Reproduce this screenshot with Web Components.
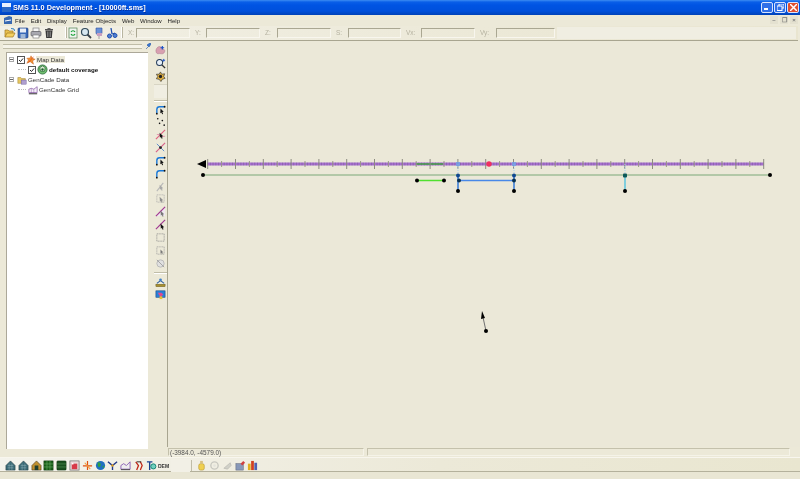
<!DOCTYPE html>
<html><head><meta charset="utf-8"><style>
html,body{margin:0;padding:0;background:#ece9d8}
body{width:800px;height:479px;overflow:hidden;font:7px "Liberation Sans",sans-serif}
</style></head><body>
<sms-app></sms-app>
<script>
const ICONS={
open:'<path d="M1 10V3h3l1 1h4v2" fill="#e8c050" stroke="#a07820" stroke-width=".7"/><path d="M1 10l2-4h8l-2 4z" fill="#f4d060" stroke="#a07820" stroke-width=".7"/><path d="M7 1.5l3 .5.5 2" fill="none" stroke="#3080c0"/>',
save:'<rect x="1" y="1" width="10" height="10" rx="1" fill="#3868b8" stroke="#183878" stroke-width=".6"/><rect x="3" y="1.5" width="6" height="4" fill="#e8eef8"/><rect x="3.5" y="7" width="5" height="4" fill="#a0b8d8"/>',
print:'<rect x="3" y="1" width="6" height="4" fill="#f4f4f4" stroke="#707070" stroke-width=".6"/><rect x="1" y="4.5" width="10" height="4.5" rx="1" fill="#a8a8b0" stroke="#505058" stroke-width=".6"/><rect x="3" y="8" width="6" height="3" fill="#fff" stroke="#707070" stroke-width=".6"/>',
trash:'<path d="M2.5 3.5h7l-.7 7.5H3.200z" fill="#383838"/><path d="M4.500 4.500v5.500M6 4.500v5.500M7.500 4.500v5.500" stroke="#a8a8a8" stroke-width=".6"/><rect x="2" y="2" width="8" height="1.300" fill="#505050"/><rect x="4.500" y="1" width="3" height="1" fill="#606060"/>',
refresh:'<rect x="2" y="1" width="8" height="10" fill="#f0f4f0" stroke="#508050" stroke-width=".7"/><path d="M4 5a2.200 2.200 0 0 1 4 0M8 7a2.200 2.200 0 0 1-4 0" fill="none" stroke="#10a030" stroke-width="1.100"/>',
zoom:'<circle cx="5" cy="5" r="3.500" fill="#d8e8f0" stroke="#304858" stroke-width="1.200"/><path d="M7.500 7.500L11 11" stroke="#384048" stroke-width="1.800"/>',
pin:'<path d="M3 1h6v5.500L6 9 3 6.500z" fill="#6890d8" stroke="#3050a0" stroke-width=".6"/><path d="M6 8.500V12" stroke="#a0a0a0"/><rect x="4" y="6" width="5" height="3" fill="#c8a0c0"/>',
scissor:'<path d="M5 1l1 6" stroke="#2050b0" stroke-width="1.300"/><circle cx="3.500" cy="9" r="2" fill="#5080d0" stroke="#2050b0"/><circle cx="9" cy="8.500" r="2" fill="#5080d0" stroke="#2050b0"/><path d="M6 7l3-1" stroke="#2050b0"/>',
mapdata:'<path d="M6 1l1.500 3L11 5 8 7l1 4-4-3-4 2 2-4-2-2 4-.5z" fill="#f09030" stroke="#c05010" stroke-width=".5"/><path d="M3 9l6-7" stroke="#e04010" stroke-width=".8"/>',
coverage:'<circle cx="6" cy="6" r="5" fill="#70c070" stroke="#206030" stroke-width=".8"/><path d="M3 4l3-2 3 2-1 4H4z" fill="#d8e8d0" stroke="#206030" stroke-width=".7"/><circle cx="6" cy="6" r="1.300" fill="#206030"/>',
folder:'<path d="M1 10V3h3.500l1 1.300H10V10z" fill="#e8c860" stroke="#a08030" stroke-width=".6"/><rect x="5" y="6" width="6" height="5" fill="#b0a0d0" stroke="#605090" stroke-width=".5"/>',
grid:'<path d="M1 9V5l3-1 3 1 4-3v7z" fill="#f4eef8" stroke="#8050a0" stroke-width=".8"/><path d="M1 10.500h10" stroke="#404040" stroke-width="1.300"/><path d="M4 4v6M7 5v5" stroke="#8050a0" stroke-width=".5"/>',
polar:'<path d="M1 6c.5-3 3-5 5-4 2 .5 2 3 4 3 1.500 1 .5 4-1.500 4.500C6 10 6 9 3.500 9.500 1.500 9.500 1 8 1 6z" fill="#d8a0b0" stroke="#a87088" stroke-width=".5"/><path d="M8 1v4M6 3h4" stroke="#1850c8" stroke-width="1.300"/>',
zoomplus:'<circle cx="5" cy="5" r="3.300" fill="#e8f0f8" stroke="#203858" stroke-width="1.100"/><path d="M7.500 7.500L11 11" stroke="#303030" stroke-width="1.500"/><path d="M9.500 1v3M8 2.500h3" stroke="#1850c8"/>',
gear:'<path d="M6 1l1.300 2.500L10.500 3 9.500 6l1.500 2-3 1-1.500 2.500L4.500 9l-3-.5L3 6 1.500 3.500 4.500 3.500z" fill="#e0b040" stroke="#303030" stroke-width=".7"/><circle cx="6" cy="6" r="1.800" fill="#202020"/>',
arc:'<path d="M2 10V6q0-3 3-3h5" fill="none" stroke="#1878d8" stroke-width="1.500"/><path d="M6 5l3.500 3.500-1.500.3.800 2-1 .4-.8-2-1.200 1z" fill="#111"/><circle cx="2" cy="10.500" r="1" fill="#111"/><circle cx="10.500" cy="3" r="1" fill="#111"/>',
dots:'<g fill="#111"><circle cx="3" cy="3" r=".9"/><circle cx="8" cy="5" r=".9"/><circle cx="5" cy="8" r=".9"/><circle cx="10" cy="10" r=".9"/></g>',
vert:'<path d="M1 11L11 1" stroke="#e06080" stroke-width="1.200"/><path d="M2 6h3M7 8h4" stroke="#e080a0" stroke-width=".8"/><path d="M5 4l4 4-1.500.2.800 2-1 .4-.8-2-1.100 1z" fill="#111"/>',
vert2:'<path d="M1 11L11 1" stroke="#d86088" stroke-width="1.200"/><path d="M2 2l8 8" stroke="#3070c8" stroke-width=".8"/><circle cx="6" cy="6" r="1.500" fill="#222"/>',
arcsel:'<path d="M2 10V6q0-3 3-3h5" fill="none" stroke="#1878d8" stroke-width="1.500"/><circle cx="2" cy="10.500" r="1" fill="#111"/><circle cx="10.500" cy="3" r="1" fill="#111"/>',
gray1:'<path d="M2 11L9 2" stroke="#b8b8b8" stroke-width="1.200"/><path d="M5 4l4 4-1.500.2.800 2-1 .4-.8-2-1.100 1z" fill="#a8a8a8"/>',
gray2:'<rect x="2" y="2" width="8" height="8" fill="none" stroke="#a8a8a8" stroke-dasharray="1 1"/><path d="M5 4l4 4-1.500.2.800 2-1 .4-.8-2-1.100 1z" fill="#909090"/>',
poly:'<path d="M1 11L11 1V11z" fill="#f0e8f0"/><path d="M1 11L11 1" stroke="#a03890" stroke-width="1.300"/><path d="M6 5l4 4-1.500.2.800 2-1 .4-.8-2-1.100 1z" fill="#777"/>',
poly2:'<path d="M1 11L11 1" stroke="#a03890" stroke-width="1.300"/><path d="M6 5l4 4-1.500.2.800 2-1 .4-.8-2-1.100 1z" fill="#111"/>',
rect1:'<rect x="2" y="2" width="8" height="8" fill="none" stroke="#888" stroke-dasharray="1 1"/>',
rect2:'<rect x="2" y="2" width="8" height="8" fill="none" stroke="#999" stroke-dasharray="1 1"/><path d="M6 5l3 3-1.200.2.500 1.500-.8.300-.5-1.500-1 1z" fill="#777"/>',
gray3:'<circle cx="6" cy="6" r="4" fill="#e0e0e0" stroke="#b8b8b8"/><path d="M2 2l8 8" stroke="#a0a0a0"/>',
stack:'<path d="M2 7l4-3 4 3" fill="none" stroke="#3060a0" stroke-width="1.200"/><rect x="1" y="8" width="10" height="2.500" fill="#a89030" stroke="#605010" stroke-width=".5"/><circle cx="6" cy="3" r="1.500" fill="#4080c8"/>',
mapbox:'<rect x="1" y="2" width="10" height="7" fill="#2880d8" stroke="#104080" stroke-width=".6"/><path d="M3 4h4l2 2-3 3z" fill="#e04890"/><rect x="5" y="8" width="3" height="3" fill="#e8c030"/>',
house1:'<path d="M6 1L1 6v5h10V6z" fill="#3c6c78" stroke="#203840" stroke-width=".6"/><path d="M3 6h6M3 8.500h6M4.500 4v7M7.500 4v7" stroke="#90b0b8" stroke-width=".5"/>',
house2:'<path d="M6 1L1 6v5h10V6z" fill="#c09030" stroke="#403010" stroke-width=".6"/><rect x="4" y="6" width="4" height="5" fill="#204030"/>',
green1:'<rect x="1" y="1" width="10" height="10" fill="#186018" stroke="#0a300a" stroke-width=".6"/><path d="M4.300 1v10M7.600 1v10M1 4.300h10M1 7.600h10" stroke="#70b070" stroke-width=".6"/>',
green2:'<rect x="1" y="1" width="10" height="10" rx="1" fill="#1a5020" stroke="#0a300a" stroke-width=".6"/><path d="M1 4.300h10M1 7.600h10" stroke="#60a060" stroke-width=".6"/>',
redbox:'<rect x="1" y="1" width="10" height="10" fill="#e8d8d8" stroke="#606060" stroke-width=".7"/><rect x="3" y="4" width="6" height="6" fill="#d83848"/><circle cx="4" cy="4" r="1" fill="#fff"/>',
star:'<path d="M1 6.500h10M6 1v10" stroke="#e05010" stroke-width="1.300"/><path d="M3 3l6 7" stroke="#f0a040" stroke-width="1.200"/>',
globe:'<circle cx="6" cy="6" r="5" fill="#2070c0"/><path d="M3 2.500c3 0 4 2 3 4s-3 1-3-1zM8 7l2-1v3z" fill="#30a040"/>',
y:'<path d="M1 2l5 4 5-4M6 6v5" fill="none" stroke="#203888" stroke-width="1.500"/><circle cx="6" cy="6" r="1.300" fill="#e0a020"/>',
line:'<path d="M1 10V6l3-2 3 2 4-4v8z" fill="#eee" stroke="#8050b0" stroke-width=".9"/><path d="M1 10.500h10" stroke="#444"/>',
redchain:'<path d="M3 2l3 4-2 5M8 2l2 4-2 5" fill="none" stroke="#c02818" stroke-width="1.400"/><path d="M4 2h5" stroke="#222"/>',
tb:'<path d="M1 2h6M4 2v9" stroke="#1a4090" stroke-width="1.500"/><circle cx="8" cy="7" r="2.800" fill="#70d0c0" stroke="#108070"/>',
dem:'<text x="6" y="8.500" text-anchor="middle" font-family="Liberation Sans" font-weight="bold" font-size="5.500" fill="#333">DEM</text>',
bottle:'<rect x="3" y="4" width="6" height="7" rx="2" fill="#f0d050" stroke="#b09020" stroke-width=".6"/><rect x="4.500" y="1" width="3" height="3" fill="#d8c080"/>',
g1:'<circle cx="6" cy="6" r="4" fill="none" stroke="#c8c8c0" stroke-width="1.500"/><circle cx="6" cy="6" r="1.500" fill="#e4e4dc"/>',
g2:'<path d="M2 9l7-6 1 3-4 4z" fill="#d0d0c8" stroke="#b0b0a8" stroke-width=".6"/>',
g3:'<rect x="1" y="4" width="8" height="7" fill="#8898b8" stroke="#505870" stroke-width=".5"/><path d="M6 4l3-3 2 2-3 3z" fill="#d04040"/>',
bars:'<rect x="1" y="4" width="3" height="7" fill="#e0b020"/><rect x="4.500" y="1" width="3" height="10" fill="#d04020"/><rect x="8" y="3" width="3" height="8" fill="#5060b0"/>'
};
function def(n,c){customElements.define(n,c)}
function shadow(el,html){el.attachShadow({mode:'open'}).innerHTML=html}
def('sms-icon',class extends HTMLElement{connectedCallback(){const s=this.getAttribute('size')||12;
 shadow(this,`<style>:host{display:inline-flex;width:${s}px;height:${s}px;flex:none}svg{width:100%;height:100%;display:block}</style><svg viewBox="0 0 12 12">${ICONS[this.getAttribute('name')]||''}</svg>`)}});
def('sms-title',class extends HTMLElement{connectedCallback(){shadow(this,`<style>
:host{display:flex;align-items:center;height:15px;background:linear-gradient(#3d8cf2 0,#0a5fe8 2px,#0054e3 5px,#0050dc 11px,#0042b8 15px);color:#fff;font:bold 7.3px "Liberation Sans",sans-serif;padding:0 1px 0 2px;box-sizing:border-box;gap:2px}
.t{flex:1;text-shadow:.5px .5px 0 #0030a0;white-space:nowrap}
.l{width:9px;height:9px;background:linear-gradient(#e8f0ff 45%,#2868c8 45%);flex:none}
.b{width:12px;height:11px;border:1px solid #d8e4fc;border-radius:2px;box-sizing:border-box;background:#3070e8;display:flex;align-items:center;justify-content:center;color:#fff}
.x{background:#e05030}.r{display:flex;gap:1px}
</style><span class="l"></span><span class="t">SMS 11.0 Development - [10000ft.sms]</span><span class="r"><span class="b"><svg width="6" height="6"><rect y="4" width="4" height="2" fill="#fff"/></svg></span><span class="b"><svg width="7" height="7"><rect x="2" y="0" width="5" height="4" fill="none" stroke="#fff"/><rect x="0" y="2" width="5" height="4.500" fill="#3070e8" stroke="#fff"/></svg></span><span class="b x"><svg width="7" height="7"><path d="M0 0l7 7M7 0L0 7" stroke="#fff" stroke-width="1.500"/></svg></span></span>`)}});
def('sms-menu',class extends HTMLElement{connectedCallback(){shadow(this,`<style>
:host{display:flex;align-items:center;height:11px;color:#222;padding:0 2px 0 3px;font:6.1px "Liberation Sans",sans-serif}
.i{margin-right:5.800px;white-space:nowrap}
.l{width:10px;height:10px;margin-right:2px;flex:none}
.s{flex:1}.c{display:flex;gap:2px}
.c span{width:8px;height:8px;font:bold 6px "Liberation Sans",sans-serif;color:#777;text-align:center;line-height:8px;background:#e4e1d0}
</style><svg class="l" viewBox="0 0 10 10"><path d="M1 9V3l5-2 3 1v7z" fill="#3868b0"/><path d="M2 6l6-1" stroke="#fff"/></svg>
<span class="i">File</span><span class="i">Edit</span><span class="i">Display</span><span class="i">Feature Objects</span><span class="i">Web</span><span class="i">Window</span><span class="i">Help</span><span class="s"></span>
<span class="c"><span>–</span><span>❐</span><span>×</span></span>`)}});
def('sms-tools',class extends HTMLElement{connectedCallback(){const f=(l,w,lw)=>`<span class="lb" style="width:${lw}px">${l}</span><span class="f" style="width:${w}px"></span>`;
shadow(this,`<style>
:host{display:flex;align-items:center;height:15px;box-sizing:border-box;padding:1px 2px 1px 4px;background:linear-gradient(90deg,#f2f0e6,#ece9d8 60%,#e9e5d0);border-bottom:1px solid #a8a590;color:#b5b2a0;font:6.5px "Liberation Sans",sans-serif;margin-right:2px}
.g{width:2px;height:11px;border-left:1px solid #fff;border-right:1px solid #b8b5a0;box-sizing:border-box;margin:0 0 0 2px;flex:none}
.ic{display:flex;gap:1px;flex:none}
.blank{width:7px;height:12px;background:#f0eee2;margin:0 0 0 1px;flex:none}
.f{height:10px;box-sizing:border-box;border:1px solid #f8f6ee;border-top-color:#aaa792;border-left-color:#aaa792;flex:none}
.lb{flex:none;padding-left:5px;box-sizing:border-box}
.rest{flex:1;height:12px;background:#f0eee2;margin-left:2px}
</style><span class="ic"><sms-icon name="open"></sms-icon><sms-icon name="save"></sms-icon><sms-icon name="print"></sms-icon><sms-icon name="trash"></sms-icon></span><span class="blank"></span><span class="g"></span>
<span class="ic"><sms-icon name="refresh"></sms-icon><sms-icon name="zoom"></sms-icon><sms-icon name="pin"></sms-icon><sms-icon name="scissor"></sms-icon></span><span class="g" style="margin-left:3px"></span>
${f('X:',54,13)}${f('Y:',54,16)}${f('Z:',54,17)}${f('S:',53,17)}${f('Vx:',54,20)}${f('Vy:',59,21)}<span class="rest"></span>`)}});
def('sms-tree-row',class extends HTMLElement{connectedCallback(){const d=+this.getAttribute('depth')||0,c=this.hasAttribute('check'),e=this.hasAttribute('exp'),h=this.hasAttribute('hl');
shadow(this,`<style>
:host{display:flex;align-items:center;height:10px;color:#333;font:6.2px "Liberation Sans",sans-serif;white-space:nowrap;padding-left:${d}px}
.e{width:5px;height:5px;border:1px solid #aaa;box-sizing:border-box;margin-right:3px;position:relative;flex:none;background:#fff}
.e::after{content:"";position:absolute;left:0;right:0;top:1px;height:1px;background:#666}
.c{width:8px;height:8px;border:1px solid #555;box-sizing:border-box;margin-right:1px;flex:none;display:flex}
.lbl{padding:0 1px}.h{background:#ece9d8}
::slotted(b){font-weight:bold;color:#111}
.d{width:8px;flex:none;height:1px;margin-left:-10px;margin-right:2px;border-top:1px dotted #bbb}
</style>${d?'<span class="d"></span>':''}${e?'<span class="e"></span>':''}${c?'<span class="c"><svg viewBox="0 0 6 6"><path d="M1 3l1.500 1.500L5 1.500" fill="none" stroke="#222" stroke-width="1"/></svg></span>':''}<sms-icon name="${this.getAttribute('icon')}" size="${this.getAttribute('isize')||10}"></sms-icon><span class="lbl ${h?'h':''}"><slot></slot></span>`)}});
def('sms-tree',class extends HTMLElement{connectedCallback(){shadow(this,`<style>
:host{display:flex;flex-direction:column;width:153px;flex:none;box-sizing:border-box;padding:2px 2px 0 6px}
.hd{height:7px;display:flex;align-items:center;gap:3px;margin:0 0 2px -3px}
.gr{flex:1;height:3px;border-top:1px solid #c0bda8;border-bottom:1px solid #c0bda8;background:#f5f3e8}
.pin{width:6px;height:6px;flex:none}
.w{background:#fff;flex:1;border-left:1px solid #aca899;border-top:1px solid #aca899;margin-right:3px;padding:2px 0 0 2px;box-sizing:border-box;margin-bottom:-2px}
</style><div class="hd"><span class="gr"></span><svg class="pin" viewBox="0 0 6 6"><path d="M1 6l2-2M2 2l2 2 2-3-1-1z" fill="#3878d8" stroke="#2050a0" stroke-width=".6"/></svg></div>
<div class="w"><sms-tree-row exp check icon="mapdata" hl>Map Data</sms-tree-row><sms-tree-row depth="19" check icon="coverage" isize="11"><b>default coverage</b></sms-tree-row><sms-tree-row exp icon="folder">GenCade Data</sms-tree-row><sms-tree-row depth="19" icon="grid">GenCade Grid</sms-tree-row></div>`)}});
def('sms-vbar',class extends HTMLElement{connectedCallback(){
const top=['polar','zoomplus','gear'],m=['arc','dots','vert','vert2','arc','arcsel','gray1','gray2','poly','poly2','rect1','rect2','gray3'],b=['stack','mapbox'];
const mk=a=>a.map(n=>`<sms-icon name="${n}" size="11"></sms-icon>`).join('');
shadow(this,`<style>
:host{display:flex;flex-direction:column;align-items:center;width:15px;flex:none;box-sizing:border-box;border-right:1px solid #a8a590;padding:4.500px 0 0 1px;background:#ece9d8}
.s{display:flex;flex-direction:column;align-items:center;gap:1.830px}
.blank{width:13px;height:13px;margin:2px 0 1px;background:#f0eee2;border-top:1px solid #d8d5c4;flex:none}
.g{width:13px;height:2px;border-top:1px solid #c0bda8;border-bottom:1px solid #fff;margin:1px 0 1.500px;box-sizing:border-box;flex:none}
.g2{margin:3px 0 3px}
</style><div class="s">${mk(top)}</div><span class="blank"></span><span class="g"></span><div class="s">${mk(m)}</div><span class="g g2"></span><div class="s">${mk(b)}</div>`)}});
def('sms-canvas',class extends HTMLElement{connectedCallback(){
let ticks='';for(let i=0;i<=40;i++){const x=207.7+i*13.9,maj=i%2==0;ticks+=`<path d="M${x} ${maj?159:161}V${maj?169:167}" stroke="${maj?'#8c8a80':'#9a9888'}" stroke-width="1"/>`}
const n=(x,y,c='#000',r=2)=>`<circle cx="${x}" cy="${y}" r="${r}" fill="${c}"/>`;
shadow(this,`<style>:host{display:block;flex:1;min-width:0;position:relative;background:#ebe8d8}svg{position:absolute;left:0;top:0;width:632px;height:407px}</style>
<svg viewBox="168 41 632 407">
<path d="M207 164H764" stroke="#a870d0" stroke-width="3"/><path d="M207 164H764" stroke="#4c4a60" stroke-width="3" stroke-dasharray="1 1.780" opacity=".3"/>
<path d="M416 164H443" stroke="#40a040" stroke-width="1.500"/>
${ticks}
<path d="M197 164l9-4v8z" fill="#000"/>
<path d="M203 175H770" stroke="#7aa878" stroke-width="1"/>
${n(203,175)}${n(770,175)}
<path d="M458 164V175M514 164V175M625 164V175" stroke="#a8d0f0" stroke-width="1" stroke-dasharray="1 1"/>
<rect x="456" y="162" width="4" height="4" fill="#70a0e8" opacity=".8"/><rect x="512" y="162" width="4" height="4" fill="#70a0e8" opacity=".8"/>
<circle cx="489" cy="164" r="2.700" fill="#f03060"/>
<path d="M417 180.500H444" stroke="#50e030" stroke-width="1.500"/>${n(417,180.500)}${n(444,180.500)}
<path d="M458 175V191M514 175V191" stroke="#1868d8" stroke-width="1.300"/><path d="M459 180.500H514" stroke="#4888e8" stroke-width="1.500"/>
${n(458,175.500,'#104890')}${n(459,180.500,'#083050')}${n(458,191)}${n(514,175.500,'#104890')}${n(514,180.500,'#083050')}${n(514,191)}
<path d="M625 175V191" stroke="#48c0e0" stroke-width="1.300"/><rect x="623" y="173.500" width="4" height="4" rx="1" fill="#0c5858"/>${n(625,191)}
<path d="M486 331L482.500 315" stroke="#707070" stroke-width="1"/><path d="M482 311l-1 8 4-1z" fill="#000"/>${n(486,331)}
</svg>`)}});
def('sms-status',class extends HTMLElement{connectedCallback(){shadow(this,`<style>
:host{display:flex;height:9px;box-sizing:border-box;padding-left:168px;padding-right:10px;margin-top:1px;gap:3px;color:#555;font:6.4px "Liberation Sans",sans-serif;line-height:7px}
.f{border:1px solid #f5f3e8;border-top-color:#c4c1ac;border-left-color:#c4c1ac;box-sizing:border-box;height:8px;padding-left:1px;white-space:nowrap}
</style><span class="f" style="width:196px"><slot></slot></span><span class="f" style="flex:1"></span>`)}});
def('sms-bottom',class extends HTMLElement{connectedCallback(){
const a=['house1','house1','house2','green1','green2','redbox','star','globe','y','line','redchain','tb','dem'],b=['bottle','g1','g2','g3','bars'];
const mk=x=>x.map(n=>`<sms-icon name="${n}" size="11"></sms-icon>`).join('');
shadow(this,`<style>
:host{display:flex;align-items:center;height:15px;box-sizing:border-box;padding:1px 0 0 5px;background:linear-gradient(90deg,#f4f3ec,#ece9d8 55%,#e9e6d0);border-top:1px solid #f8f6ee;border-bottom:1px solid #b4b19c}
.s{display:flex;gap:1.780px;flex:none}
.sp{width:1px;height:11px;background:#c0bda8;margin:0 2px 0 1px}.gr{width:19px;height:13px;background:#f2f0e6;flex:none;margin-left:2px}
</style><div class="s">${mk(a.slice(0,6))}</div><div class="s" style="margin-left:2px">${mk(a.slice(6))}</div><span class="gr"></span><span class="sp"></span><div class="s" style="margin-left:2px">${mk(b)}</div>`)}});
def('sms-app',class extends HTMLElement{connectedCallback(){shadow(this,`<style>
:host{display:flex;flex-direction:column;width:800px;height:479px;background:#ece9d8;overflow:hidden;filter:blur(.3px)}
.main{display:flex;height:407px}
.foot{height:7px;background:#e9e6d4}
</style><sms-title></sms-title><sms-menu></sms-menu><sms-tools></sms-tools>
<div class="main"><sms-tree></sms-tree><sms-vbar></sms-vbar><sms-canvas></sms-canvas></div>
<sms-status>(-3984.0, -4579.0)</sms-status><sms-bottom></sms-bottom><div class="foot"></div>`)}});
</script></body></html>
